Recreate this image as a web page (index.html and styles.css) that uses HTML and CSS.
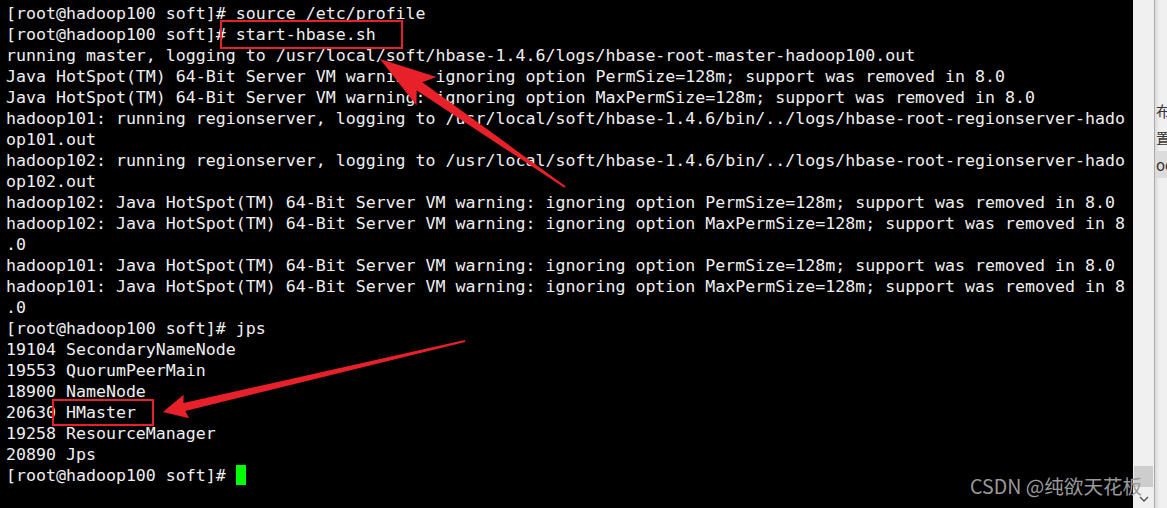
FILE: index.html
```html
<!DOCTYPE html>
<html lang="zh">
<head>
<meta charset="utf-8">
<title>terminal</title>
<link rel="stylesheet" href="styles.css">
</head>
<body>
<div class="window">
  <div class="terminal">
<pre class="output">[root@hadoop100 soft]# source /etc/profile
[root@hadoop100 soft]# start-hbase.sh
running master, logging to /usr/local/soft/hbase-1.4.6/logs/hbase-root-master-hadoop100.out
Java HotSpot(TM) 64-Bit Server VM warning: ignoring option PermSize=128m; support was removed in 8.0
Java HotSpot(TM) 64-Bit Server VM warning: ignoring option MaxPermSize=128m; support was removed in 8.0
hadoop101: running regionserver, logging to /usr/local/soft/hbase-1.4.6/bin/../logs/hbase-root-regionserver-hado
op101.out
hadoop102: running regionserver, logging to /usr/local/soft/hbase-1.4.6/bin/../logs/hbase-root-regionserver-hado
op102.out
hadoop102: Java HotSpot(TM) 64-Bit Server VM warning: ignoring option PermSize=128m; support was removed in 8.0
hadoop102: Java HotSpot(TM) 64-Bit Server VM warning: ignoring option MaxPermSize=128m; support was removed in 8
.0
hadoop101: Java HotSpot(TM) 64-Bit Server VM warning: ignoring option PermSize=128m; support was removed in 8.0
hadoop101: Java HotSpot(TM) 64-Bit Server VM warning: ignoring option MaxPermSize=128m; support was removed in 8
.0
[root@hadoop100 soft]# jps
19104 SecondaryNameNode
19553 QuorumPeerMain
18900 NameNode
20630 HMaster
19258 ResourceManager
20890 Jps
[root@hadoop100 soft]# <span class="cursor"></span></pre>
  </div>
  <div class="scrollbar">
    <div class="thumb"></div>
    <div class="down">
      <svg width="10" height="6" viewBox="0 0 10 6"><path d="M1 1 L5 5 L9 1" fill="none" stroke="#555" stroke-width="1.4"/></svg>
    </div>
  </div>
  <div class="divider"></div>
  <div class="side">
    <div class="side-line">布</div>
    <div class="side-line">置</div>
    <div class="side-line shade">oc</div>
  </div>
</div>

<div class="mark mark-1"></div>
<div class="mark mark-2"></div>

<svg class="arrows" width="1167" height="508" viewBox="0 0 1167 508">
  <polygon fill="#e8202a" points="380,59 436.5,77 422.3,82.2 565.6,186.2 564.4,187.8 416.7,90.4 416.5,105.5"/>
  <polygon fill="#e8202a" points="163,412 189.1,418.2 185.3,410.9 465.2,342 464.8,340 183.5,403.1 183.6,394.8"/>
</svg>

<div class="watermark">CSDN @纯欲天花板</div>
</body>
</html>
```

FILE: styles.css
```css
html, body {
  margin: 0;
  padding: 0;
  width: 1167px;
  height: 508px;
  overflow: hidden;
  background: #000;
}

.window {
  display: flex;
  width: 1167px;
  height: 508px;
}

.terminal {
  width: 1133px;
  flex: 0 0 1133px;
  background: #000;
  overflow: hidden;
}

.output {
  margin: 0;
  padding: 3px 0 0 6px;
  font-family: "DejaVu Sans Mono", "Liberation Mono", monospace;
  font-size: 16.6px;
  line-height: 21px;
  color: #efefef;
  white-space: pre;
}

.cursor {
  display: inline-block;
  width: 10px;
  height: 20px;
  background: #00ff00;
  vertical-align: -4px;
}

.scrollbar {
  flex: 0 0 21px;
  background: #f0f0f0;
  display: flex;
  flex-direction: column;
  justify-content: flex-end;
  align-items: center;
}

.thumb {
  width: 19px;
  height: 21px;
  background: #cdcdcd;
}

.down {
  height: 21px;
  width: 21px;
  display: flex;
  align-items: center;
  justify-content: center;
  padding-top: 2px;
  box-sizing: border-box;
}

.divider {
  flex: 0 0 1px;
  background: #a8a8a8;
}

.side {
  flex: 1 1 auto;
  background: linear-gradient(to right, #d9d9d9, #efefef 4px, #f0f0f0);
  padding-top: 97px;
  overflow: hidden;
}

.side-line {
  font-family: "Noto Sans CJK SC", "Noto Sans", sans-serif;
  font-size: 15px;
  line-height: 27px;
  height: 27px;
  color: #333;
  white-space: nowrap;
  padding-left: 1px;
}

.side-line.shade {
  background: #dcdcdc;
}

.mark {
  position: absolute;
  border: 2px solid #e8202a;
  box-sizing: border-box;
}

.mark-1 {
  left: 220px;
  top: 20px;
  width: 183px;
  height: 29px;
}

.mark-2 {
  left: 52px;
  top: 399px;
  width: 102px;
  height: 27px;
}

.arrows {
  position: absolute;
  left: 0;
  top: 0;
}

.watermark {
  position: absolute;
  left: 970px;
  top: 473px;
  font-family: "Noto Sans CJK SC", "Noto Sans", sans-serif;
  font-size: 19.6px;
  line-height: 26px;
  color: #9a9a9a;
  white-space: nowrap;
}
```
